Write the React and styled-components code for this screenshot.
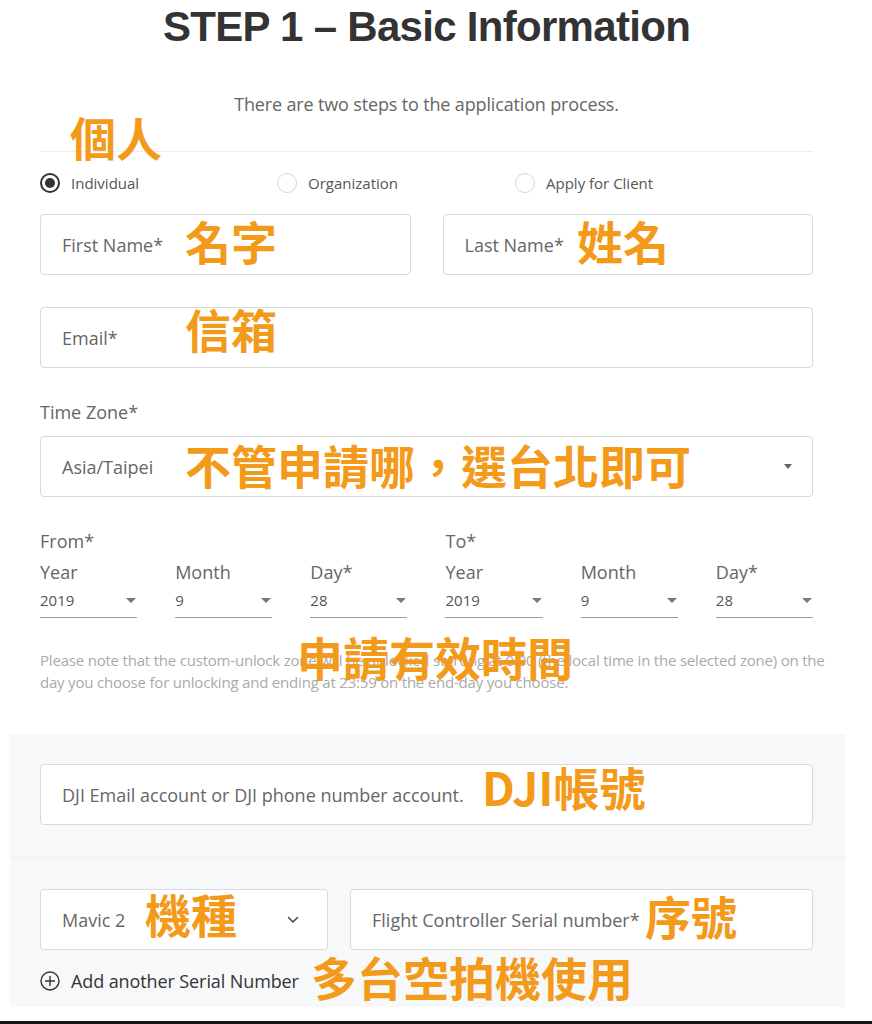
import React from 'react';
import styled, { createGlobalStyle } from 'styled-components';

const GlobalStyle = createGlobalStyle`
  html, body {
    margin: 0;
    padding: 0;
    background: #fff;
  }
  body {
    font-family: 'Open Sans', 'Noto Sans', sans-serif;
    color: #555;
  }
  * {
    box-sizing: border-box;
  }
`;

const Page = styled.div`
  position: relative;
  width: 872px;
  min-height: 1024px;
  display: flex;
  flex-direction: column;
  overflow: hidden;
`;

const Column = styled.main`
  width: 773px;
  margin-left: 40px;
  display: flex;
  flex-direction: column;
`;

const Title = styled.h1`
  margin: 3px 0 0;
  font-family: 'Liberation Sans', Arial, sans-serif;
  font-size: 42px;
  line-height: 48px;
  font-weight: 700;
  letter-spacing: -0.7px;
  color: #333;
  text-align: center;
`;

const Lead = styled.p`
  margin: 41px 0 0;
  font-size: 18px;
  line-height: 24px;
  letter-spacing: -0.15px;
  color: #666;
  text-align: center;
`;

const Rule = styled.hr`
  margin: 35px 0 0;
  border: none;
  height: 1px;
  background: #eee;
`;

const RadioGroup = styled.div`
  display: grid;
  grid-template-columns: 237px 238px auto;
  margin-top: 21px;
`;

const RadioOption = styled.label`
  display: flex;
  align-items: center;
  gap: 11px;
  font-size: 15px;
  line-height: 20px;
  color: #555;
`;

const RadioCircle = styled.span`
  width: 20px;
  height: 20px;
  border-radius: 50%;
  border: ${(p) => (p.$checked ? '2px solid #333' : '1px solid #d6d6d6')};
  display: flex;
  align-items: center;
  justify-content: center;
  background: #fff;

  &::after {
    content: '';
    display: ${(p) => (p.$checked ? 'block' : 'none')};
    width: 10px;
    height: 10px;
    border-radius: 50%;
    background: #333;
  }
`;

const FieldRow = styled.div`
  display: grid;
  grid-template-columns: ${(p) => p.$cols || '1fr'};
  gap: ${(p) => p.$gap || 32}px;
  margin-top: ${(p) => p.$mt || 0}px;
`;

const Field = styled.div`
  height: 61px;
  border: 1px solid #d9d9d9;
  border-radius: 4px;
  background: #fff;
  display: flex;
  align-items: center;
  justify-content: space-between;
  padding: 0 ${(p) => p.$pr || 20}px 0 21px;
  font-size: 18px;
  color: #666;
  white-space: nowrap;
`;

const Label = styled.div`
  margin-top: ${(p) => p.$mt || 0}px;
  font-size: 18px;
  line-height: 24px;
  color: #666;
`;

const Caret = styled.span`
  width: 0;
  height: 0;
  border-left: ${(p) => p.$w / 2}px solid transparent;
  border-right: ${(p) => p.$w / 2}px solid transparent;
  border-top: ${(p) => p.$h}px solid ${(p) => p.$color || '#666'};
`;

const DateGrid = styled.div`
  display: grid;
  grid-template-columns: repeat(6, 1fr);
  column-gap: 38px;
  margin-top: 32px;
`;

const GroupLabel = styled.div`
  grid-column: span 3;
  margin-bottom: 7px;
  font-size: 18px;
  line-height: 24px;
  color: #666;
`;

const DateField = styled.div`
  display: flex;
  flex-direction: column;
`;

const DateLabel = styled.div`
  font-size: 18px;
  line-height: 24px;
  color: #666;
`;

const DateSelect = styled.div`
  margin-top: 5px;
  display: flex;
  align-items: center;
  justify-content: space-between;
  padding: 0 1px 6px 0;
  line-height: 22px;
  font-size: 15px;
  color: #555;
  border-bottom: 1px solid #9a9a9a;
`;

const Note = styled.p`
  margin: 31px -14px 0 0;
  font-size: 15px;
  line-height: 22px;
  letter-spacing: -0.2px;
  color: #aaa;
`;

const Panel = styled.section`
  margin: 41px 0 0 -30px;
  width: 835px;
  background: #f7f8fa;
  padding: 30px 32px 14px 30px;
  display: flex;
  flex-direction: column;
`;

const PanelRule = styled.div`
  margin: 32px -32px 31px -30px;
  height: 1px;
  background: #eceef1;
`;

const AddLink = styled.div`
  margin-top: 19px;
  display: flex;
  align-items: center;
  gap: 11px;
  font-size: 18px;
  line-height: 24px;
  letter-spacing: -0.1px;
  color: #333;
`;

const BottomBar = styled.div`
  margin-top: auto;
  height: 3px;
  background: #151515;
`;

const Annotation = styled.span`
  position: absolute;
  left: ${(p) => p.$x}px;
  top: ${(p) => p.$y}px;
  font-family: 'Noto Sans CJK TC', 'Noto Sans CJK SC', sans-serif;
  font-size: 46px;
  line-height: 1;
  font-weight: 700;
  color: #f39a1b;
  white-space: nowrap;
  pointer-events: none;
`;

const Chevron = () => (
  <svg width="12" height="8" viewBox="0 0 12 8" fill="none">
    <path d="M1.5 1.5 L6 6 L10.5 1.5" stroke="#444" strokeWidth="1.5" strokeLinecap="round" strokeLinejoin="round" />
  </svg>
);

const PlusCircle = () => (
  <svg width="20" height="20" viewBox="0 0 20 20" fill="none">
    <circle cx="10" cy="10" r="9" stroke="#333" strokeWidth="1.4" />
    <path d="M10 5.5 V14.5 M5.5 10 H14.5" stroke="#333" strokeWidth="1.4" strokeLinecap="round" />
  </svg>
);

const dateCols = [
  { label: 'Year', value: '2019' },
  { label: 'Month', value: '9' },
  { label: 'Day*', value: '28' },
];

const notes = [
  { text: '個人', x: 70, y: 113 },
  { text: '名字', x: 185, y: 217 },
  { text: '姓名', x: 577, y: 217 },
  { text: '信箱', x: 185, y: 305 },
  { text: '不管申請哪，選台北即可', x: 185, y: 441 },
  { text: '申請有效時間', x: 297, y: 633 },
  { text: 'DJI帳號', x: 482, y: 763 },
  { text: '機種', x: 145, y: 890 },
  { text: '序號', x: 645, y: 892 },
  { text: '多台空拍機使用', x: 311, y: 953 },
];

export default function App() {
  return (
    <>
      <GlobalStyle />
      <Page>
        <Column>
          <Title>STEP 1 – Basic Information</Title>
          <Lead>There are two steps to the application process.</Lead>
          <Rule />

          <RadioGroup>
            <RadioOption><RadioCircle $checked />Individual</RadioOption>
            <RadioOption><RadioCircle />Organization</RadioOption>
            <RadioOption><RadioCircle />Apply for Client</RadioOption>
          </RadioGroup>

          <FieldRow $cols="1fr 1fr" $mt={21}>
            <Field>First Name*</Field>
            <Field>Last Name*</Field>
          </FieldRow>

          <FieldRow $mt={32}>
            <Field>Email*</Field>
          </FieldRow>

          <Label $mt={32}>Time Zone*</Label>
          <FieldRow $mt={12}>
            <Field>
              Asia/Taipei
              <Caret $w={8} $h={5} />
            </Field>
          </FieldRow>

          <DateGrid>
            <GroupLabel>From*</GroupLabel>
            <GroupLabel>To*</GroupLabel>
            {[...dateCols, ...dateCols].map((c, i) => (
              <DateField key={i}>
                <DateLabel>{c.label}</DateLabel>
                <DateSelect>
                  {c.value}
                  <Caret $w={10} $h={5} $color="#777" />
                </DateSelect>
              </DateField>
            ))}
          </DateGrid>

          <Note>
            Please note that the custom-unlock zone will be unlocked starting at 0:00 (the local time in the selected zone) on the
            day you choose for unlocking and ending at 23:59 on the end-day you choose.
          </Note>

          <Panel>
            <Field>DJI Email account or DJI phone number account.</Field>
            <PanelRule />
            <FieldRow $cols="288px 1fr" $gap={22}>
              <Field $pr={28}>
                Mavic 2
                <Chevron />
              </Field>
              <Field>Flight Controller Serial number*</Field>
            </FieldRow>
            <AddLink>
              <PlusCircle />
              Add another Serial Number
            </AddLink>
          </Panel>
        </Column>
        <BottomBar />

        {notes.map((n) => (
          <Annotation key={n.text} $x={n.x} $y={n.y}>{n.text}</Annotation>
        ))}
      </Page>
    </>
  );
}
